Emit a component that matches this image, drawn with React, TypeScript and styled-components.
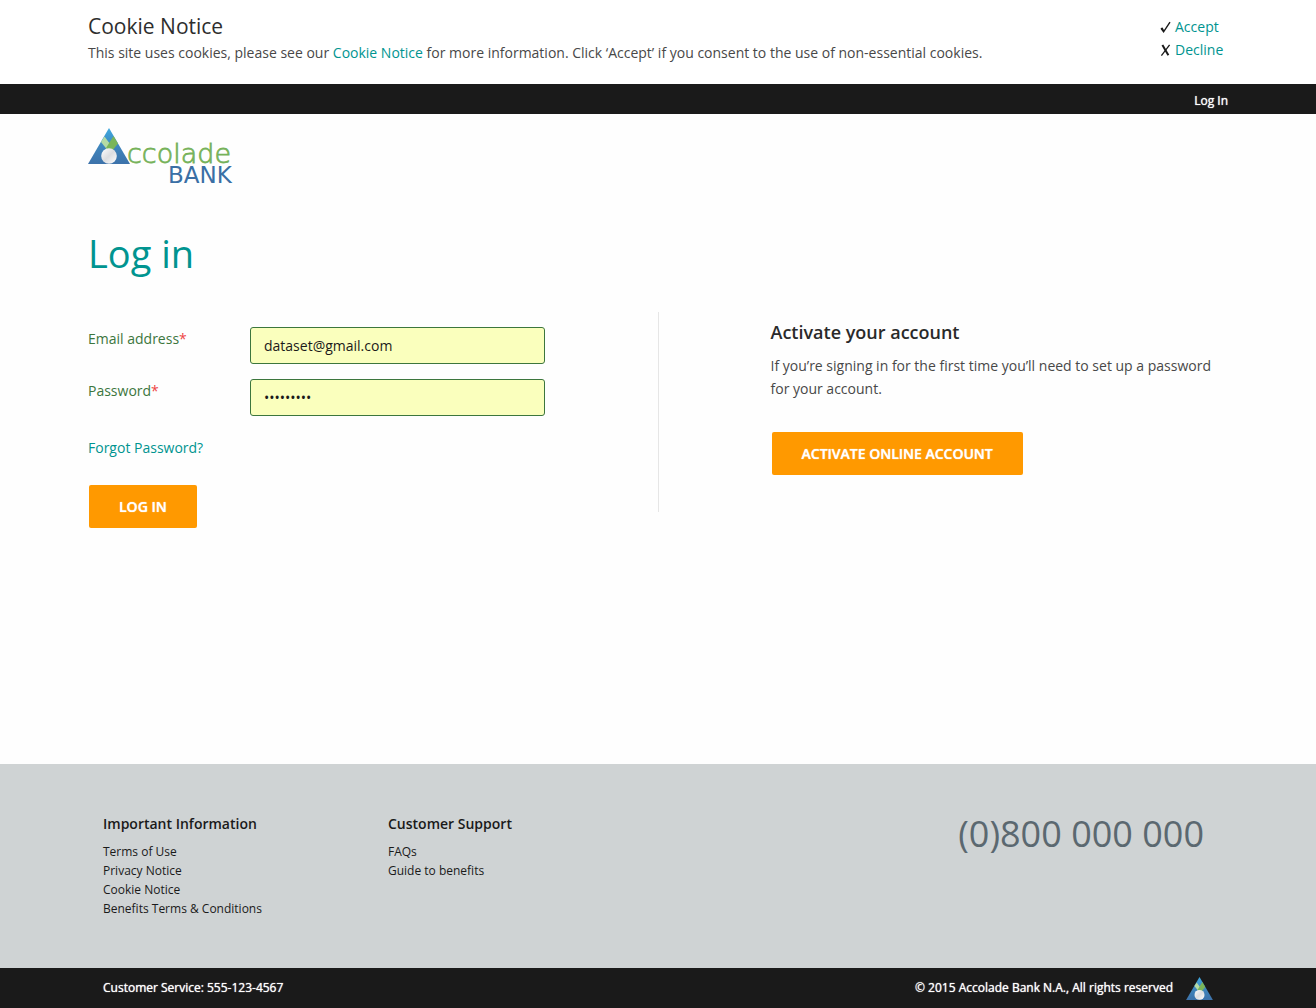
import React from "react";
import styled, { createGlobalStyle } from "styled-components";

const GlobalStyle = createGlobalStyle`
  *, *::before, *::after { box-sizing: border-box; }
  body {
    margin: 0;
    background: #fefefe;
    color: #1a1a1a;
    font: 400 14px/23px "Open Sans", "Noto Sans", sans-serif;
  }
  h1, h2, h3, p, ul { margin: 0; padding: 0; font-weight: 400; }
  ul { list-style: none; }
`;

const Page = styled.div`
  display: flex;
  flex-direction: column;
  min-height: 100vh;
`;

const Container = styled.div`
  width: 100%;
  max-width: 1140px;
  margin: 0 auto;
`;

const TextLink = styled.a`
  color: #009490;
  text-decoration: none;
  &:hover { text-decoration: underline; }
`;

const CookieBar = styled.section`
  background: #fff;
  padding: 11px 16px 20px;
`;

const CookieInner = styled(Container)`
  display: flex;
  justify-content: space-between;
  gap: 24px;
`;

const CookieTitle = styled.h2`
  font-size: 21px;
  line-height: 30px;
  color: #2e2e2e;
`;

const Copy = styled.p`
  color: #484848;
`;

const Choices = styled.ul`
  width: 68px;
  padding-top: 4px;
  flex: none;
`;

const Choice = styled.li`
  display: flex;
  align-items: center;
  gap: 4px;
`;

const TopBar = styled.nav`
  background: #1a1a1a;
  height: 30px;
  padding: 0 16px;
`;

const TopInner = styled(Container)`
  display: flex;
  justify-content: flex-end;
`;

const TopLink = styled.a`
  color: #fff;
  font-size: 12px;
  line-height: 33px;
  text-decoration: none;
  text-shadow: 0 0 1px #fff;
`;

const Header = styled.header`
  padding: 13px 16px 0;
  svg { display: block; }
`;

const Main = styled.main`
  flex: 1;
  padding: 42px 16px 48px;
`;

const Title = styled.h1`
  color: #009490;
  font-size: 38px;
  line-height: 48px;
`;

const Columns = styled.div`
  display: grid;
  grid-template-columns: 1fr 1px 1fr;
  padding-top: 35px;
  align-items: start;
`;

const Divider = styled.div`
  height: 200px;
  background: #e6e6e6;
`;

const LoginForm = styled.form`
  padding: 15px 113px 0 0;
`;

const Field = styled.div`
  display: grid;
  grid-template-columns: 162px 1fr;
  margin-bottom: 15px;
`;

const Label = styled.label`
  color: #3c763d;
`;

const Required = styled.span`
  color: #ee4444;
`;

const Input = styled.input`
  width: 100%;
  height: 37px;
  padding: 0 13px;
  border: 1px solid #3c763d;
  border-radius: 3px;
  background: #faffbd;
  color: #1a1a1a;
  font: inherit;
`;

const Forgot = styled.div`
  padding: 5px 0 26px;
`;

const Button = styled.button`
  height: 43px;
  margin-left: 1px;
  padding: 0 30px;
  border: 0;
  border-radius: 2px;
  background: #ff9900;
  color: #fff;
  font: 600 14px/23px "Open Sans", "Noto Sans", sans-serif;
  text-transform: uppercase;
  text-shadow: 0 0 1px #fff;
  cursor: pointer;
`;

const Activate = styled.section`
  padding: 8px 0 0 112px;
  ${Button} { margin-top: 32px; }
`;

const ActivateTitle = styled.h2`
  font-size: 18px;
  line-height: 25px;
  font-weight: 600;
  margin-bottom: 9px;
  color: #2a2a2a;
`;

const FooterTop = styled.footer`
  background: #cfd3d4;
  padding: 48px 16px;
  min-height: 204px;
`;

const FooterInner = styled(Container)`
  display: grid;
  grid-template-columns: 1fr 1fr 2fr;
`;

const FooterGroup = styled.div`
  padding-left: 15px;
`;

const FooterTitle = styled.h3`
  font-size: 14px;
  line-height: 24px;
  font-weight: 600;
  margin-bottom: 6px;
`;

const FooterLink = styled.a`
  display: block;
  color: #1a1a1a;
  font-size: 12px;
  line-height: 19px;
  text-decoration: none;
`;

const Phone = styled.p`
  color: #5b6870;
  font-size: 36px;
  line-height: 44px;
  text-align: right;
  padding-right: 24px;
`;

const FooterBar = styled.div`
  background: #1a1a1a;
  color: #fff;
  font-size: 12px;
  padding: 0 16px;
`;

const BarInner = styled(Container)`
  display: flex;
  justify-content: space-between;
  align-items: center;
  height: 40px;
  padding: 0 15px;
`;

const BarText = styled.p`
  padding-bottom: 2px;
  text-shadow: 0 0 1px #fff;
`;

const Copyright = styled.div`
  display: flex;
  align-items: center;
  gap: 13px;
`;

const Mark = ({ id }: { id: string }) => (
  <>
    <defs>
      <linearGradient id={`${id}-blue`} x1="0" y1="0" x2="0" y2="1">
        <stop offset="0" stopColor="#3fa9e0" />
        <stop offset=".5" stopColor="#3f86bd" />
        <stop offset="1" stopColor="#3d72aa" />
      </linearGradient>
      <linearGradient id={`${id}-medal`} x1="0" y1="0" x2="1" y2="1">
        <stop offset="0" stopColor="#fff" />
        <stop offset=".5" stopColor="#dcdde0" />
        <stop offset="1" stopColor="#fff" />
      </linearGradient>
    </defs>
    <path d="M21 0 42 36H0Z" fill={`url(#${id}-blue)`} />
    <path d="M13 14 16.5 8.5 25 20 21 24Z" fill="#b5dba5" />
    <path d="M25.5 8 30 15.5 22.5 25 18 20Z" fill="#7ab558" />
    <circle cx="21" cy="28" r="7.8" fill={`url(#${id}-medal)`} />
  </>
);

const Logo = () => (
  <svg width="147" height="60" viewBox="0 0 147 60" role="img" aria-label="Accolade Bank">
    <g transform="translate(0 1)">
      <Mark id="logo" />
    </g>
    <text x="39" y="36" fill="#76b25a" stroke="#76b25a" strokeWidth=".8" fontFamily="DejaVu Sans" fontWeight="200" fontSize="27">
      ccolade
    </text>
    <text x="80" y="56" fill="#3a6fa5" fontFamily="DejaVu Sans" fontSize="23">
      BANK
    </text>
  </svg>
);

const CheckIcon = () => (
  <svg width="11" height="12" viewBox="0 0 11 12" aria-hidden="true">
    <path d="M1 7.4 3.6 10.8 10 1.2" fill="none" stroke="#1a1a1a" strokeWidth="1.4" />
    <path d="M.8 7 2.6 6.4 4.2 9.4 3.4 11Z" fill="#1a1a1a" />
  </svg>
);

const CrossIcon = () => (
  <svg width="11" height="12" viewBox="0 0 11 12" aria-hidden="true">
    <path d="M2.4 1 8.4 11.2" fill="none" stroke="#1a1a1a" strokeWidth="2" />
    <path d="M9.6 .8 1.4 11.6" fill="none" stroke="#1a1a1a" strokeWidth="1.3" />
  </svg>
);

const groups = [
  { title: "Important Information", links: ["Terms of Use", "Privacy Notice", "Cookie Notice", "Benefits Terms & Conditions"] },
  { title: "Customer Support", links: ["FAQs", "Guide to benefits"] },
];

export default function App() {
  return (
    <Page>
      <GlobalStyle />
      <CookieBar>
        <CookieInner>
          <div>
            <CookieTitle>Cookie Notice</CookieTitle>
            <Copy>
              This site uses cookies, please see our <TextLink href="#cookies">Cookie Notice</TextLink> for more
              information. Click ‘Accept’ if you consent to the use of non-essential cookies.
            </Copy>
          </div>
          <Choices>
            <Choice><CheckIcon /><TextLink href="#accept">Accept</TextLink></Choice>
            <Choice><CrossIcon /><TextLink href="#decline">Decline</TextLink></Choice>
          </Choices>
        </CookieInner>
      </CookieBar>
      <TopBar>
        <TopInner><TopLink href="#login">Log In</TopLink></TopInner>
      </TopBar>
      <Header>
        <Container><Logo /></Container>
      </Header>
      <Main>
        <Container>
          <Title>Log in</Title>
          <Columns>
            <LoginForm onSubmit={(e) => e.preventDefault()}>
              <Field>
                <Label htmlFor="email">Email address<Required>*</Required></Label>
                <Input id="email" type="email" defaultValue="dataset@gmail.com" />
              </Field>
              <Field>
                <Label htmlFor="password">Password<Required>*</Required></Label>
                <Input id="password" type="password" defaultValue="password1" />
              </Field>
              <Forgot><TextLink href="#forgot">Forgot Password?</TextLink></Forgot>
              <Button type="submit">Log in</Button>
            </LoginForm>
            <Divider />
            <Activate>
              <ActivateTitle>Activate your account</ActivateTitle>
              <Copy>If you’re signing in for the first time you’ll need to set up a password for your account.</Copy>
              <Button type="button">Activate online account</Button>
            </Activate>
          </Columns>
        </Container>
      </Main>
      <FooterTop>
        <FooterInner>
          {groups.map((g) => (
            <FooterGroup key={g.title}>
              <FooterTitle>{g.title}</FooterTitle>
              {g.links.map((l) => <FooterLink key={l} href="#info">{l}</FooterLink>)}
            </FooterGroup>
          ))}
          <Phone>(0)800 000 000</Phone>
        </FooterInner>
      </FooterTop>
      <FooterBar>
        <BarInner>
          <BarText>Customer Service: 555-123-4567</BarText>
          <Copyright>
            <BarText>© 2015 Accolade Bank N.A., All rights reserved</BarText>
            <svg width="27" height="23" viewBox="0 0 42 36" aria-hidden="true"><Mark id="mini" /></svg>
          </Copyright>
        </BarInner>
      </FooterBar>
    </Page>
  );
}
